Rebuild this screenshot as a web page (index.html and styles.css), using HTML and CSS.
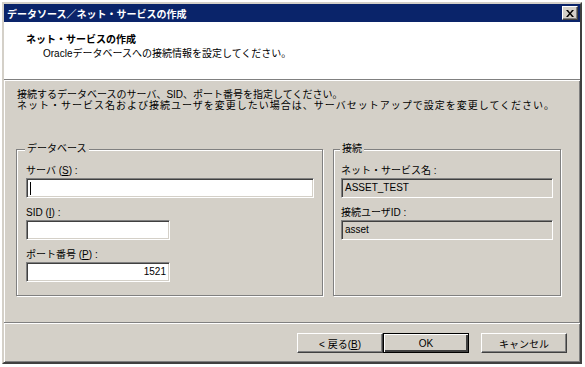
FILE: index.html
```html
<!DOCTYPE html>
<html lang="ja">
<head>
    <meta charset="UTF-8">
    <title>データソース／ネット・サービスの作成</title>
    <link rel="stylesheet" href="styles.css">
</head>
<body>
    <div class="window">
        <div class="titlebar">
            <span class="title">データソース／ネット・サービスの作成</span>
            <span class="close-btn">
                <svg width="8" height="7" viewBox="0 0 8 7">
                    <path d="M0 0h2l2 2.5L6 0h2L5 3.5 8 7H6L4 4.5 2 7H0l3-3.5z" fill="#000"/>
                </svg>
            </span>
        </div>

        <div class="header">
            <div class="header-title">ネット・サービスの作成</div>
            <div class="header-sub">Oracleデータベースへの接続情報を設定してください。</div>
        </div>

        <div class="content">
            <p class="intro">
                <span class="intro-line">接続するデータベースのサーバ、SID、ポート番号を指定してください。</span>
                <span class="intro-line intro-wide">ネット・サービス名および接続ユーザを変更したい場合は、サーバセットアップで設定を変更してください。</span>
            </p>

            <div class="groups">
                <fieldset class="group group-db">
                    <legend>データベース</legend>
                    <label class="field-label">サーバ (<u>S</u>) :</label>
                    <div class="field field-wide"><span class="caret"></span></div>
                    <label class="field-label">SID (<u>I</u>) :</label>
                    <div class="field field-short"></div>
                    <label class="field-label">ポート番号 (<u>P</u>) :</label>
                    <div class="field field-short field-num">1521</div>
                </fieldset>

                <fieldset class="group group-conn">
                    <legend>接続</legend>
                    <label class="field-label">ネット・サービス名 :</label>
                    <div class="field field-readonly">ASSET_TEST</div>
                    <label class="field-label">接続ユーザID :</label>
                    <div class="field field-readonly">asset</div>
                </fieldset>
            </div>
        </div>

        <div class="footer">
            <button class="btn">&lt; 戻る(<u>B</u>)</button>
            <button class="btn btn-default">OK</button>
            <button class="btn btn-cancel">キャンセル</button>
        </div>
    </div>
</body>
</html>
```

FILE: styles.css
```css
body {
    margin: 0;
    background-color: #fff;
    font-family: "Liberation Sans", "Noto Sans CJK JP", sans-serif;
    font-size: 10px;
    color: #000;
}

.window {
    margin: 2px 0 0 2px;
    width: 580px;
    height: 362px;
    box-sizing: border-box;
    background-color: #d4d0c8;
    border: 2px solid;
    border-color: #d4d0c8 #404040 #404040 #d4d0c8;
    box-shadow: inset 1px 1px 0 #fff, inset -1px -1px 0 #808080;
    display: flex;
    flex-direction: column;
}

/* title bar */
.titlebar {
    height: 18px;
    flex: none;
    background-color: #0a246a;
    color: #fff;
    font-weight: bold;
    display: flex;
    align-items: center;
    justify-content: space-between;
    padding: 0 2px 0 3px;
}

.close-btn {
    width: 16px;
    height: 14px;
    box-sizing: border-box;
    background-color: #d4d0c8;
    border: 1px solid;
    border-color: #fff #404040 #404040 #fff;
    box-shadow: inset -1px -1px 0 #808080;
    display: flex;
    align-items: center;
    justify-content: center;
}

/* white header */
.header {
    height: 58px;
    flex: none;
    box-sizing: border-box;
    background-color: #fff;
    padding: 11px 0 0 22px;
    border-bottom: 1px solid #808080;
    box-shadow: 0 1px 0 #fff;
    line-height: 14px;
}

.header-title {
    font-weight: bold;
}

.header-sub {
    padding-left: 17px;
}

/* body */
.content {
    flex: 1;
    padding: 8px 0 0 12px;
    margin-top: 1px;
}

.intro {
    margin: 0;
    padding-left: 1px;
    line-height: 11px;
}

.intro-line {
    display: block;
}

.intro-wide {
    letter-spacing: 1px;
}

.groups {
    display: flex;
    gap: 10px;
    margin-top: 32px;
}

.group {
    margin: 0;
    min-width: 0;
    height: 153px;
    box-sizing: border-box;
    border: 1px solid #808080;
    box-shadow: inset 1px 1px 0 #fff, 1px 1px 0 #fff;
    display: flex;
    flex-direction: column;
    align-items: flex-start;
}

.group legend {
    padding: 0 2px;
    margin-left: -1px;
    line-height: 12px;
    background-color: #d4d0c8;
}

.group-db {
    width: 307px;
    padding: 10px 0 0 9px;
}

.group-conn {
    width: 228px;
    padding: 10px 0 0 7px;
}

.field-label {
    line-height: 12px;
    margin-bottom: 1px;
}

.field {
    height: 20px;
    box-sizing: border-box;
    background-color: #fff;
    border: 1px solid;
    border-color: #808080 #fff #fff #808080;
    box-shadow: inset 1px 1px 0 #404040, inset -1px -1px 0 #d4d0c8;
    padding: 0 3px;
    line-height: 18px;
    margin-bottom: 9px;
}

.field-wide {
    width: 288px;
}

.field-short {
    width: 144px;
}

.field-num {
    text-align: right;
}

.field-readonly {
    width: 212px;
    background-color: #d4d0c8;
}

.caret {
    display: inline-block;
    width: 1px;
    height: 13px;
    background-color: #000;
    vertical-align: middle;
}

/* footer with buttons */
.footer {
    height: 40px;
    flex: none;
    box-sizing: border-box;
    border-top: 1px solid #808080;
    box-shadow: inset 0 1px 0 #fff;
    padding: 10px 13px 0 0;
    display: flex;
    justify-content: flex-end;
    align-items: flex-start;
}

.btn {
    width: 86px;
    height: 20px;
    box-sizing: border-box;
    font-family: inherit;
    font-size: 10px;
    background-color: #d4d0c8;
    border: 1px solid;
    border-color: #fff #404040 #404040 #fff;
    box-shadow: inset -1px -1px 0 #808080;
    padding: 0;
}

.btn-default {
    border: 1px solid #000;
    box-shadow: inset 1px 1px 0 #fff, inset -2px -2px 0 #404040, inset -1px -1px 0 #808080;
}

.btn-cancel {
    margin-left: 12px;
}
```
